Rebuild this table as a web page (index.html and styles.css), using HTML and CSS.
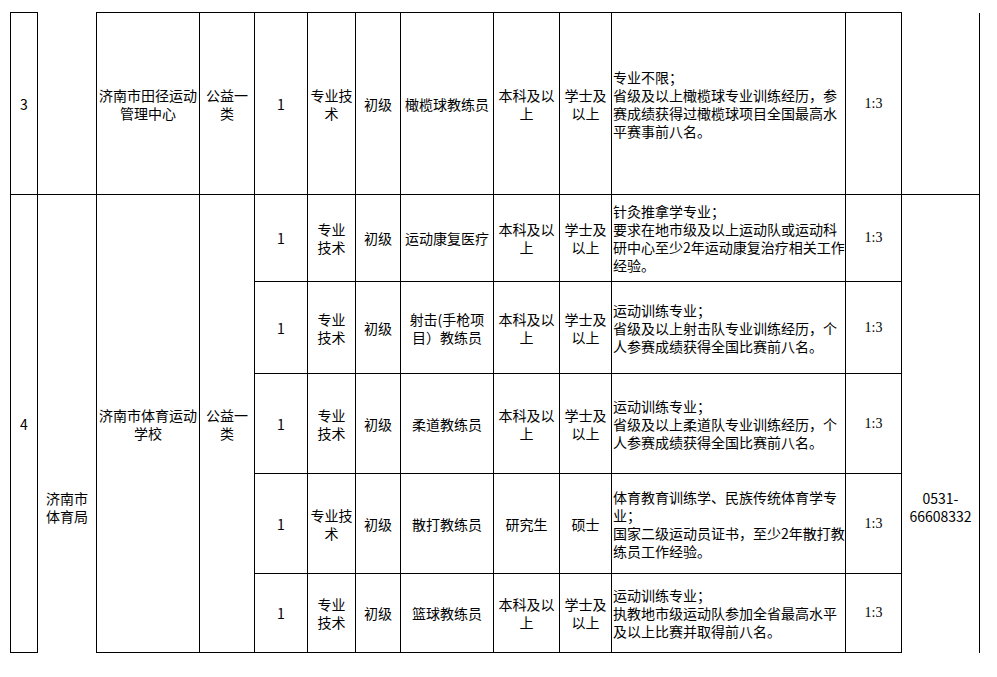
FILE: index.html
```html
<!DOCTYPE html>
<html lang="zh-CN">
<head>
<meta charset="utf-8">
<title>岗位表</title>
<link rel="stylesheet" href="styles.css">
</head>
<body>
<table class="grid">
  <colgroup>
    <col class="c1"><col class="c2"><col class="c3"><col class="c4"><col class="c5"><col class="c6"><col class="c7"><col class="c8"><col class="c9"><col class="c10"><col class="c11"><col class="c12"><col class="c13">
  </colgroup>
  <tr class="r1">
    <td>3</td>
    <td class="open-top"></td>
    <td>济南市田径运动<br>管理中心</td>
    <td>公益一<br>类</td>
    <td>1</td>
    <td>专业技<br>术</td>
    <td>初级</td>
    <td>橄榄球教练员</td>
    <td>本科及以<br>上</td>
    <td>学士及<br>以上</td>
    <td class="note">专业不限；<br>省级及以上橄榄球专业训练经历，参<br>赛成绩获得过橄榄球项目全国最高水<br>平赛事前八名。</td>
    <td class="ratio">1:3</td>
    <td class="open-top"></td>
  </tr>
  <tr class="r2">
    <td rowspan="5">4</td>
    <td rowspan="5" class="open-bottom low">济南市<br>体育局</td>
    <td rowspan="5">济南市体育运动<br>学校</td>
    <td rowspan="5">公益一<br>类</td>
    <td>1</td>
    <td>专业<br>技术</td>
    <td>初级</td>
    <td>运动康复医疗</td>
    <td>本科及以<br>上</td>
    <td>学士及<br>以上</td>
    <td class="note">针灸推拿学专业；<br>要求在地市级及以上运动队或运动科<br>研中心至少2年运动康复治疗相关工作<br>经验。</td>
    <td class="ratio">1:3</td>
    <td rowspan="5" class="open-bottom low">0531-<br>66608332</td>
  </tr>
  <tr class="r3">
    <td>1</td>
    <td>专业<br>技术</td>
    <td>初级</td>
    <td>射击(手枪项<br>目）教练员</td>
    <td>本科及以<br>上</td>
    <td>学士及<br>以上</td>
    <td class="note">运动训练专业；<br>省级及以上射击队专业训练经历，个<br>人参赛成绩获得全国比赛前八名。</td>
    <td class="ratio">1:3</td>
  </tr>
  <tr class="r4">
    <td>1</td>
    <td>专业<br>技术</td>
    <td>初级</td>
    <td>柔道教练员</td>
    <td>本科及以<br>上</td>
    <td>学士及<br>以上</td>
    <td class="note">运动训练专业；<br>省级及以上柔道队专业训练经历，个<br>人参赛成绩获得全国比赛前八名。</td>
    <td class="ratio">1:3</td>
  </tr>
  <tr class="r5">
    <td>1</td>
    <td>专业技<br>术</td>
    <td>初级</td>
    <td>散打教练员</td>
    <td>研究生</td>
    <td>硕士</td>
    <td class="note">体育教育训练学、民族传统体育学专<br>业；<br>国家二级运动员证书，至少2年散打教<br>练员工作经验。</td>
    <td class="ratio">1:3</td>
  </tr>
  <tr class="r6">
    <td>1</td>
    <td>专业<br>技术</td>
    <td>初级</td>
    <td>篮球教练员</td>
    <td>本科及以<br>上</td>
    <td>学士及<br>以上</td>
    <td class="note">运动训练专业；<br>执教地市级运动队参加全省最高水平<br>及以上比赛并取得前八名。</td>
    <td class="ratio">1:3</td>
  </tr>
</table>
</body>
</html>
```

FILE: styles.css
```css
html, body {
  margin: 0;
  padding: 0;
  background: #ffffff;
}

body {
  font-family: "Noto Sans CJK SC", "DejaVu Sans", sans-serif;
  font-size: 14px;
  line-height: 18px;
  color: #000000;
}

.grid {
  border-collapse: collapse;
  table-layout: fixed;
  width: 970px;
  margin: 12px 0 0 10px;
}

.grid td {
  border: 1px solid #000000;
  padding: 0 1px;
  text-align: center;
  vertical-align: middle;
  white-space: nowrap;
  overflow: hidden;
}

.c1 { width: 27px; }
.c2 { width: 59px; }
.c3 { width: 103px; }
.c4 { width: 55px; }
.c5 { width: 53px; }
.c6 { width: 48px; }
.c7 { width: 45px; }
.c8 { width: 93px; }
.c9 { width: 66px; }
.c10 { width: 52px; }
.c11 { width: 234px; }
.c12 { width: 56px; }
.c13 { width: 78px; }

.r1 { height: 182px; }
.r2 { height: 87px; }
.r3 { height: 92px; }
.r4 { height: 100px; }
.r5 { height: 100px; }
.r6 { height: 79px; }

.grid td.note {
  text-align: left;
  padding-left: 1px;
}

.grid td.ratio {
  font-family: "Liberation Serif", serif;
  font-size: 14px;
}

.grid td.open-top {
  border-top-style: hidden;
}

.grid td.open-bottom {
  border-bottom-style: hidden;
}

.grid td.low {
  padding-top: 166px;
}
```
